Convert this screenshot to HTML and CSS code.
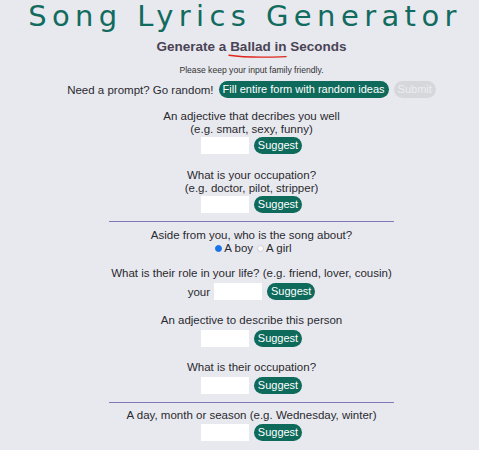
FILE: index.html
```html
<!DOCTYPE html>
<html>
<head>
<meta charset="utf-8">
<link rel="stylesheet" href="styles.css">
</head>
<body>
<div class="page">
  <h1 class="title">Song Lyrics Generator</h1>
  <h2 class="subtitle">Generate a <span class="mark">Ballad in<svg class="squiggle" viewBox="0 0 60 4" preserveAspectRatio="none"><path d="M1 1.2 C 15 3.4, 40 3.4, 59 2.6" fill="none" stroke="#e0261b" stroke-width="1.4" stroke-linecap="round"/></svg></span> Seconds</h2>
  <p class="note">Please keep your input family friendly.</p>
  <div class="random"><span>Need a prompt? Go random!</span><button class="pill">Fill entire form with random ideas</button><button class="pill disabled">Submit</button></div>

  <div class="field first">
    <div class="label">An adjective that decribes you well<br>(e.g. smart, sexy, funny)</div>
    <div class="row tight"><span class="box"></span><button class="pill">Suggest</button></div>
  </div>
  <div class="field second">
    <div class="label">What is your occupation?<br>(e.g. doctor, pilot, stripper)</div>
    <div class="row tight"><span class="box"></span><button class="pill">Suggest</button></div>
  </div>
  <hr class="rule">
  <div class="field after-rule">
    <div class="label">Aside from you, who is the song about?</div>
    <div class="radio-row"><span class="radio on"></span>A boy <span class="radio"></span>A girl</div>
  </div>
  <div class="field after-radio">
    <div class="label">What is their role in your life? (e.g. friend, lover, cousin)</div>
    <div class="row row-your"><span class="pre">your</span><span class="box"></span><button class="pill">Suggest</button></div>
  </div>
  <div class="field">
    <div class="label">An adjective to describe this person</div>
    <div class="row"><span class="box"></span><button class="pill">Suggest</button></div>
  </div>
  <div class="field">
    <div class="label">What is their occupation?</div>
    <div class="row"><span class="box"></span><button class="pill">Suggest</button></div>
  </div>
  <hr class="rule">
  <div class="field after-rule last">
    <div class="label">A day, month or season (e.g. Wednesday, winter)</div>
    <div class="row short"><span class="box"></span><button class="pill">Suggest</button></div>
  </div>
</div>
</body>
</html>
```
FILE: styles.css
```css
html, body {
  margin: 0;
  padding: 0;
  background: #e8e9ee;
}
.page {
  width: 479px;
  display: flex;
  flex-direction: column;
  align-items: center;
  font-family: "Liberation Sans", Arial, sans-serif;
  color: #2a2a2e;
  font-size: 11.5px;
  padding-left: 24px;
  box-sizing: border-box;
}
.title {
  margin: 0 13px 0 0;
  font-family: "DejaVu Sans", Verdana, sans-serif;
  font-weight: normal;
  font-size: 29px;
  letter-spacing: 5.4px;
  color: #116b5e;
  line-height: 33px;
}
.subtitle {
  margin: 5px 0 0;
  font-size: 13.5px;
  font-weight: bold;
  color: #4a4356;
  line-height: 18px;
}
.mark {
  position: relative;
}
.squiggle {
  position: absolute;
  left: -2px;
  top: 15px;
  width: 59px;
  height: 4px;
}
.note {
  margin: 8px 0 0;
  font-size: 8.6px;
  line-height: 12px;
  color: #333;
}
.random {
  margin-top: 5px;
  display: flex;
  align-items: center;
  gap: 5px;
  font-size: 11.5px;
}
.pill {
  font-family: "Liberation Sans", Arial, sans-serif;
  font-size: 11px;
  background: #0e6a5b;
  color: #fff;
  border: none;
  border-radius: 9px;
  padding: 0 4px;
  height: 17px;
  line-height: 17px;
}
.pill.disabled {
  background: #d6d7db;
  color: #ededf0;
}
.field {
  display: flex;
  flex-direction: column;
  align-items: center;
  margin-top: 14px;
}
.field.first {
  margin-top: 12px;
}
.field.second {
  margin-top: 15px;
}
.field.after-rule {
  margin-top: 7px;
}
.field.last {
  margin-top: 6px;
}
.field.after-radio {
  margin-top: 13px;
}
.label {
  text-align: center;
  line-height: 13px;
}
.row {
  display: flex;
  align-items: center;
  gap: 5px;
  margin-top: 3px;
}
.row.tight {
  margin-top: 1px;
}
.row.short {
  margin-top: 2px;
}
.row-your {
  margin-top: 3px;
}
.pre {
  margin-right: -1px;
}
.box {
  display: block;
  width: 48px;
  height: 17px;
  background: #fff;
}
.rule {
  width: 285px;
  border: none;
  border-top: 1px solid #7d7bb6;
  margin: 8px 0 0;
}
.radio-row {
  display: flex;
  align-items: center;
  line-height: 12px;
}
.radio {
  display: inline-block;
  width: 5px;
  height: 5px;
  border-radius: 50%;
  border: 1px solid #cfcfd4;
  background: #fff;
  margin: 0 2px 0 4px;
}
.radio.on {
  background: #1a73e8;
  border-color: #1a73e8;
}
```
